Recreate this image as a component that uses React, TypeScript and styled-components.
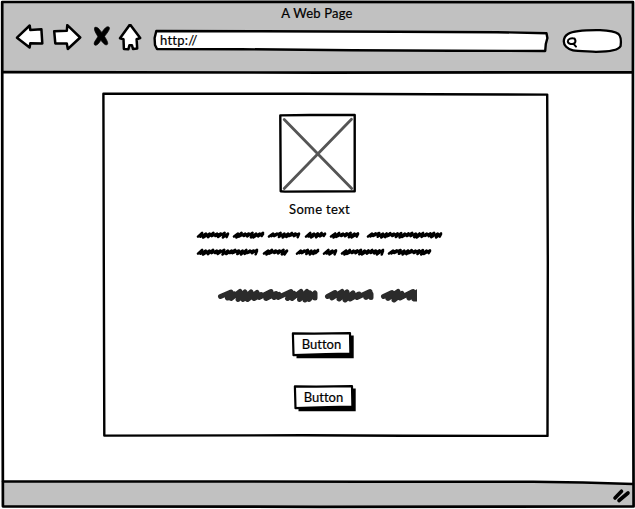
import React from "react";
import styled, { createGlobalStyle } from "styled-components";

const GlobalStyle = createGlobalStyle`
  * { box-sizing: border-box; }
  body { margin: 0; background: #fff; }
`;

const Window = styled.div`
  position: relative;
  width: 635px;
  height: 509px;
  padding: 2px 2px 2px 3px;
  display: flex;
  flex-direction: column;
  overflow: hidden;
  color: #000;
  font-family: Lato, "Liberation Sans", sans-serif;
  font-size: 13px;
  line-height: 16px;
  font-variant-ligatures: none;
  -webkit-text-stroke: 0.2px #000;
`;

const Drawing = styled.svg`
  display: block;
  flex: none;
  fill: none;
  stroke: #000;
  stroke-linecap: round;
  stroke-linejoin: round;
`;

const Outline = styled(Drawing)`
  position: absolute;
  left: 0;
  top: 0;
  pointer-events: none;
  overflow: visible;
`;

const Header = styled.header`
  height: 70px;
  flex: none;
  background: #c1c1c1;
  display: flex;
  flex-direction: column;
`;

const Title = styled.div`
  height: 22px;
  padding: 3px 2px 0 0;
  text-align: center;
  letter-spacing: 0.2px;
`;

const Toolbar = styled.div`
  display: flex;
  align-items: flex-start;
  padding-left: 11px;
`;

const NavIcons = styled.nav`
  display: flex;
  width: 137px;
  flex: none;
`;

const Field = styled.div<{ $width: number; $gap: number }>`
  position: relative;
  width: ${(p) => p.$width}px;
  height: 26px;
  margin-left: ${(p) => p.$gap}px;
  margin-top: 4px;
  flex: none;
`;

const FieldText = styled.span`
  position: relative;
  display: block;
  padding: 4px 0 0 8px;
  letter-spacing: 0.25px;
`;

const Main = styled.main`
  flex: 1;
  padding: 21px 0 0 100px;
  background: #fff;
`;

const Panel = styled.section`
  position: relative;
  width: 446px;
  height: 345px;
  padding-top: 20px;
`;

const Picture = styled(Drawing)`
  margin-left: 175px;
`;

const Caption = styled.p`
  margin: 8px 0 0;
  width: 433px;
  height: 16px;
  text-align: center;
  letter-spacing: 0.35px;
`;

const Copy = styled(Drawing)<{ $left: number; $top: number }>`
  margin: ${(p) => p.$top}px 0 0 ${(p) => p.$left}px;
`;

const Button = styled.button<{ $left: number; $top: number }>`
  position: relative;
  display: block;
  width: 63px;
  height: 27px;
  margin: ${(p) => p.$top}px 0 0 ${(p) => p.$left}px;
  padding: 0 4px 4px 0;
  border: 0;
  background: none;
  color: inherit;
  font: inherit;
  font-variant-ligatures: none;
  letter-spacing: 0;
`;

const ButtonText = styled.span`
  position: relative;
`;

const Footer = styled.footer`
  position: relative;
  height: 25px;
  flex: none;
  background: #c1c1c1;
`;

type Word = [number, number];

// Builds the zigzag pen strokes that stand for one line of words.
function scribble(words: Word[], y: number, height: number, step: number): string {
  return words
    .map(([from, to], w) => {
      const count = Math.max(2, Math.round((to - from) / step));
      const dx = (to - from) / count;
      let d = `M${from} ${y + height * 0.8}`;
      for (let i = 0; i < count; i++) {
        const x = from + i * dx;
        const up = y + height * (0.04 + 0.16 * Math.abs(Math.sin(i * 2.1 + w)));
        const down = y + height * (0.84 + 0.16 * Math.sin(i * 1.3 + w * 2));
        const lean = i % 4 === 1 ? 0.35 : 0.65;
        d += `L${Math.min(to, x + dx * 1.1).toFixed(1)} ${up.toFixed(1)}`;
        d += `L${(x + dx * lean).toFixed(1)} ${down.toFixed(1)}`;
      }
      return d + `L${to} ${y + height * 0.3}`;
    })
    .join("");
}

const lineOne: Word[] = [[2, 32], [38, 67], [73, 103], [110, 129], [135, 162], [172, 245]];
const lineTwo: Word[] = [[2, 61], [68, 91], [101, 122], [128, 140], [146, 187], [193, 234]];

function SketchButton({ left, top }: { left: number; top: number }) {
  return (
    <Button $left={left} $top={top}>
      <Outline width="63" height="27">
        <path d="M4.5 4L61.7 3.4V26.2H4.5Z" fill="#000" stroke="none" />
        <path d="M0.9 1.4L22 1.6L58 1.2L58.4 21.6L34 22.2L1.5 23.1Z" fill="#fff" strokeWidth="2.2" />
      </Outline>
      <ButtonText>Button</ButtonText>
    </Button>
  );
}

export default function App() {
  return (
    <>
      <GlobalStyle />
      <Window>
        <Header>
          <Title>A Web Page</Title>
          <Toolbar>
            <NavIcons>
              <Drawing width="137" height="32" viewBox="14 24 137 32" strokeWidth="2.5">
                <g fill="#fff">
                  <path d="M17 37.7L29.7 25.5L30.3 30L41.4 29.2L42.3 43.4L30.3 43.2L29.6 47.6Z" />
                  <path d="M54.2 31.2L66.8 30.8L67.3 25.2L80.2 37.5L67.8 49L66.8 43.6L55.3 43.4Z" />
                  <path d="M130 24.4L140.2 38L136.6 39.2L137.2 48.4L133 49L131.9 45.2L129.4 45.2L128.4 49.2L123.9 49L123.5 39.2L120 38.2Z" />
                </g>
                <path
                  d="M95 27C98 25.4 100 30.4 102 32C103.5 29 107 24.6 109.2 26.8C110.6 28.8 105.8 34 104.6 36C105.8 38 109.2 43.2 107 44.2C104.6 45.2 102.3 41 100.8 39.8C99.5 42 96.6 46 94.6 44.4C92.8 42.2 97 38.5 97.8 36C96.6 33.5 93 29 95 27Z"
                  fill="#000"
                  strokeWidth="0.7"
                  transform="translate(0 0.5)"
                />
              </Drawing>
            </NavIcons>
            <Field $width={396} $gap={1}>
              <Outline width="396" height="24">
                <path
                  d="M4.3 3L110 3.3L245 3.7L345 4.2L394.5 5.2L395.4 10L393.8 16L393.2 23L300 22.7L200 22.2L90 21.2L5 21L3 17L2.6 10Z"
                  fill="#fff"
                  strokeWidth="2.4"
                />
              </Outline>
              <FieldText>http://</FieldText>
            </Field>
            <Field $width={62} $gap={14}>
              <Outline width="62" height="26" viewBox="562 28 62 26">
                <path
                  d="M568 34C573 31 585 30 600 30.2C608 30.6 615 31.5 618.5 34C620.6 36 621.3 41 620.6 46C618.5 50.5 609 51.8 596 51.8C588 51.3 577 51.2 573 50.3C567 49 563.8 45 563.8 41.5C563.8 38 566 35.2 568 34Z"
                  fill="#fff"
                  strokeWidth="2.3"
                />
                <path
                  d="M574.6 38.6C571.6 37.4 567.8 38.8 567.8 41.4C568 44.4 572.6 44.8 574.8 43C575.6 41.8 575.6 40 574.6 38.6M573.4 43.6L576 46.6"
                  strokeWidth="2"
                />
              </Outline>
            </Field>
          </Toolbar>
        </Header>
        <Main>
          <Panel>
            <Outline width="446" height="345">
              <path d="M0.4 0.7L200 0.8L330 1.3L444.2 1.6L444.8 170L444.5 342.9L300 342.8L200 342.3L1.3 342.6L0.8 170Z" strokeWidth="2.4" />
            </Outline>
            <Picture width="78" height="80" viewBox="278 113 78 80">
              <path d="M284.2 119.5L351.7 188.5M351.5 119.2L284.2 188.5" stroke="#555" strokeWidth="2.8" />
              <path d="M280.3 115.4L310 115L354.7 115L354.7 191.3L285 191.6L280.7 191.2Z" strokeWidth="2.4" />
            </Picture>
            <Caption>Some text</Caption>
            <Copy width="248" height="28" $left={93} $top={13} strokeWidth="2.5">
              <path d={scribble(lineOne, 2.6, 5, 3.7)} />
              <path d={scribble(lineTwo, 19.6, 5, 3.7)} />
            </Copy>
            <Copy width="201" height="15" $left={113} $top={30} viewBox="216 288 201 15" strokeWidth="5">
              <path
                stroke="#2b2b2b"
                d="M220.5 296.5L231 292L227.5 298L234 294L231 298.5L240 291.5L238 299.5L245 292L243 299.5L251 292L247.5 299.5L257 292.5L254 298.5L261 294.5L259 297.5L271 291.5L266 298.5L276 293.5L274 297.5L279 294.5L278 297.5L291 291.5L287.5 298.5L294 293.5L292 298.5L301 291.5L299.5 299.5L307 291.5L305 300L310 293L309 299.5L315 293V298M327.5 296.5L335 292.5L332 298L342 291.5L339 299L347 292L345 300L353 293L350 299L359 294L357 297.5L370 291.5L366 297.5L371 294V297.5M383.5 296.5L392 292.5L388 298.5L398 291.5L394 300L402 293.5L400 298L413 291.5L409 298L417 292L414 299H419V292"
              />
            </Copy>
            <SketchButton left={189} top={29} />
            <SketchButton left={191} top={26} />
          </Panel>
        </Main>
        <Footer>
          <Outline width="630" height="25">
            <path d="M520 0L630 2V-3H520Z" fill="#fff" stroke="none" />
            <path d="M0 -.5L180 -.5L360 -.2L530 -.2L580 .6L630 2" strokeWidth="2.5" />
            <path d="M612 16L618.5 9.2M616 18.5L625 11" strokeWidth="3.6" />
          </Outline>
        </Footer>
        <Outline width="635" height="509">
          <path d="M2.2 2L310 1.8L633 2.2L632.8 220L633.6 506.4L320 506.8L2.9 506.3L2.3 240Z" strokeWidth="2.7" />
          <path d="M3 72.2L320 72.6L632 72.3" strokeWidth="2.7" />
        </Outline>
      </Window>
    </>
  );
}
